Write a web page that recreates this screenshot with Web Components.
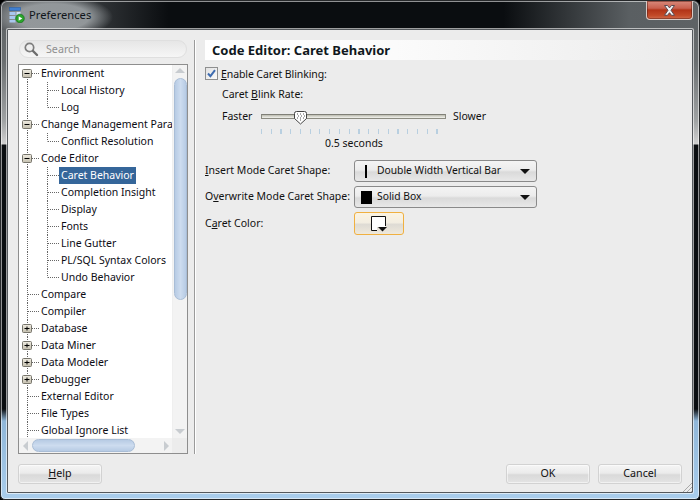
<!DOCTYPE html>
<html><head><meta charset="utf-8"><style>
html,body{margin:0;padding:0;background:#000;width:700px;height:500px;overflow:hidden}
body{font:10.5px "Noto Sans",sans-serif;color:#111}
</style></head><body>
<x-window>
  <x-titlebar slot="title">Preferences</x-titlebar>
  <x-tree-panel slot="left"></x-tree-panel>
  <x-caret-panel slot="right"></x-caret-panel>
  <x-btn slot="help" wide><u>H</u>elp</x-btn>
  <x-btn slot="ok">OK</x-btn>
  <x-btn slot="cancel">Cancel</x-btn>
</x-window>
<script>
const def=(n,html)=>{customElements.define(n,class extends HTMLElement{
  constructor(){super();this.attachShadow({mode:'open'}).innerHTML=typeof html==='function'?html(this):html;}
});};
const FONT='"Noto Sans",sans-serif';
const STRIP='linear-gradient(180deg,#5c6062 0,#6a6e70 60px,#a0a3a4 120px,#d0d0d0 143px,#0a0d10 144px,#0a0d10 408px,#8fb6d8 420px,#a9cdec 100%)';

def('x-window',`<style>
:host{display:flex;flex-direction:column;width:700px;height:500px;box-sizing:border-box;border-radius:7px 7px 5px 5px;overflow:hidden;border:1px solid #26282a;
background:
 linear-gradient(90deg,rgba(90,94,97,1) 0,rgba(90,94,97,1) 3%,rgba(10,13,16,1) 24%,rgba(10,13,16,1) 72%,#5a5f62 90%,#5e6265 100%) 0 0/100% 29px no-repeat,
 ${STRIP} 0 0/8px 100% no-repeat,
 ${STRIP} 100% 0/8px 100% no-repeat,
 #a9cdec;position:relative;box-shadow:inset 0 0 0 1px rgba(255,255,255,.55)}
.top{flex:none;height:28px}
.client{flex:1;margin:0 6px 6px;background:#ececec;border:1px solid #55595d;border-radius:1px;display:flex;flex-direction:column;min-height:0;box-shadow:0 0 0 1px rgba(255,255,255,.6);position:relative}
.main{flex:1;display:flex;min-height:0;padding:10px 10px 0 10px}
.foot{flex:none;display:flex;align-items:center;padding:10px 10px 8px 10px;gap:8px;height:20px}
.sp{flex:1}
.grip{position:absolute;right:0;bottom:0;width:12px;height:12px;background:repeating-linear-gradient(135deg,transparent 0 1px,#a9a9a9 1px 2px,#ececec 2px 3px);clip-path:polygon(100% 0,100% 100%,0 100%)}
</style>
<div class="top"><slot name="title"></slot></div>
<div class="client">
 <div class="main"><slot name="left"></slot><slot name="right"></slot></div>
 <div class="foot"><slot name="help"></slot><div class="sp"></div><slot name="ok"></slot><slot name="cancel"></slot></div>
 <div class="grip"></div>
</div>`);

def('x-titlebar',`<style>
:host{display:flex;align-items:center;height:28px;padding-left:8px;gap:4px;position:relative;font:11.2px ${FONT};color:#10151a}
.glow{position:absolute;left:-8px;top:-6px;width:120px;height:44px;background:radial-gradient(ellipse closest-side,rgba(150,155,158,.95) 60%,rgba(150,155,158,0));}
svg,span{position:relative}
span{margin-top:-2px}
.x{position:absolute;right:6px;top:0;width:47px;height:19px;box-sizing:border-box;border:1px solid #d8cac6;border-top:none;border-radius:0 0 4px 4px;background:linear-gradient(180deg,#d98a7c 0,#c9604e 40%,#b23418 50%,#c24a28 80%,#cf6b4c 100%);display:flex;align-items:center;justify-content:center;box-shadow:inset 0 0 0 1px rgba(90,30,20,.5)}
</style>
<div class="glow"></div>
<svg width="16" height="16" viewBox="0 0 16 16"><rect x="0.5" y="0.5" width="11" height="3" fill="#3f7fd0" stroke="#2b62aa" stroke-width=".6"/><rect x="0.5" y="5" width="6" height="3" fill="#a9c7ee"/><rect x="7.500" y="5" width="4" height="3" fill="#cfe0f6"/><rect x="0.5" y="9" width="6" height="3" fill="#a9c7ee"/><rect x="0.5" y="13" width="6" height="2.5" fill="#a9c7ee"/><circle cx="11" cy="11.5" r="4.3" fill="#2aa52a" stroke="#12701a" stroke-width=".7"/><path d="M9.7 9.2v4.6l3.6-2.3z" fill="#fff"/></svg>
<span><slot></slot></span>
<div class="x"><svg width="15" height="13" viewBox="0 0 15 13"><path d="M2.500 1.500h3l2 2.400 2-2.400h3l-3.500 4.800 3.500 5h-3l-2-2.600-2 2.600h-3l3.500-5z" fill="#f3f5f8" stroke="#5b4a50" stroke-width="1"/></svg></div>`);

def('x-btn',`<style>
:host{display:flex;align-items:center;justify-content:center;width:84px;height:20px;box-sizing:border-box;padding-bottom:2px;border:1px solid #d2d2d2;border-radius:3px;background:linear-gradient(180deg,#f5f5f5 0,#ebebeb 45%,#d9d9d9 55%,#e4e4e4 100%);font:10.7px ${FONT};color:#111;box-shadow:inset 0 0 0 1px rgba(255,255,255,.5)}
</style><span><slot></slot></span>`);

/* ---------- tree ---------- */
def('x-tree-row',(h)=>{
 const l=+h.getAttribute('level')||0,k=h.getAttribute('kind')||'leaf',pos=h.getAttribute('pos')||'mid';
 const sel=h.hasAttribute('selected');
 const w=l?40:20;
 let g='<path d="M8.5 ROOTY1V17" stroke="#666" stroke-dasharray="1 1" fill="none"/>'.replace('ROOTY1',h.hasAttribute('first')?'8':'0');
 if(l){g+=`<path d="M28.5 0V${pos==='last'?8.5:17}M29 8.5H40" stroke="#666" stroke-dasharray="1 1" fill="none"/>`;}
 else{g+=`<path d="M${k==='leaf'?9:13} 8.5H20" stroke="#666" stroke-dasharray="1 1" fill="none"/>`;
  if(k!=='leaf'){g+=`<rect x="3.5" y="4.5" width="9" height="8" rx="1" fill="url(#b)" stroke="#77756c"/><path d="M5.500 8.500h5" stroke="#000"/>`+(k==='closed'?'<path d="M8 6.500v4" stroke="#000"/>':'');}
 }
 return `<style>
 :host{display:flex;height:17px;align-items:center;font:10.5px ${FONT};color:#0c0c14;white-space:nowrap;min-width:0}
 svg{flex:none}
 span{padding:0 2px;line-height:16px;height:17px;${sel?'background:#35669a;color:#fff;':''}}
 </style><svg width="${w}" height="17" viewBox="0 0 ${w} 17"><defs><linearGradient id="b" x1="0" y1="0" x2="0" y2="1"><stop offset="0" stop-color="#efece2"/><stop offset="1" stop-color="#c4bfae"/></linearGradient></defs>${g}</svg><span><slot></slot></span>`;
});

def('x-vscroll',`<style>
:host{display:flex;flex-direction:column;align-items:center;width:14px;flex:none;background:#f3f3f3;border-left:1px solid #efefef;padding:0}
.a{width:0;height:0;border:5px solid transparent;border-top:none;border-bottom:5px solid #c8ccd0;margin-top:3px}
.t{width:13px;height:222px;margin-top:5px;box-sizing:border-box;border:1px solid #a9bdd6;border-radius:7px;background:linear-gradient(90deg,#b7cbe4,#cddcef 50%,#b7cbe4)}
.s{flex:1}
.d{width:0;height:0;border:5px solid transparent;border-bottom:none;border-top:5px solid #c8ccd0;margin-bottom:4px}
</style><div class="a"></div><div class="t"></div><div class="s"></div><div class="d"></div>`);

def('x-hscroll',`<style>
:host{display:flex;align-items:center;height:15px;flex:none;background:#f3f3f3}
.a{width:0;height:0;border:5px solid transparent;border-left:none;border-right:5px solid #c8ccd0;margin-left:4px}
.t{width:103px;height:13px;margin-left:4px;box-sizing:border-box;border:1px solid #a9bdd6;border-radius:7px;background:linear-gradient(180deg,#b7cbe4,#cddcef 50%,#b7cbe4)}
.s{flex:1}
.d{width:0;height:0;border:5px solid transparent;border-right:none;border-left:5px solid #c8ccd0;margin-right:3px}
.c{width:15px;height:15px;background:#ececec}
</style><div class="a"></div><div class="t"></div><div class="s"></div><div class="d"></div><div class="c"></div>`);

const rows=[
 ['Environment',0,'open',{first:1}],['Local History',1],['Log',1,'leaf',{last:1}],
 ['Change Management Param',0,'open'],['Conflict Resolution',1,'leaf',{last:1}],
 ['Code Editor',0,'open'],['Caret Behavior',1,'leaf',{sel:1}],['Completion Insight',1],['Display',1],['Fonts',1],['Line Gutter',1],['PL/SQL Syntax Colors',1],['Undo Behavior',1,'leaf',{last:1}],
 ['Compare',0],['Compiler',0],['Database',0,'closed'],['Data Miner',0,'closed'],['Data Modeler',0,'closed'],['Debugger',0,'closed'],['External Editor',0],['File Types',0],['Global Ignore List',0]];
const rowHtml=rows.map(([t,l,k,o])=>{o=o||{};return `<x-tree-row level="${l}" kind="${k||'leaf'}" pos="${o.last?'last':'mid'}"${o.first?' first':''}${o.sel?' selected':''}>${t}</x-tree-row>`}).join('');

def('x-tree-panel',`<style>
:host{display:flex;flex-direction:column;width:170px;flex:none;gap:6px}
.search{height:18px;box-sizing:border-box;margin:0 1px;border:1px solid #dfdfdf;border-radius:9px;background:linear-gradient(180deg,#e6e6e6,#f6f6f6);display:flex;align-items:center;gap:7px;padding-left:3px;color:#8f8f8f;font:10.7px ${FONT}}
.search span{margin-top:0}
.tree{flex:1;min-height:0;display:flex;flex-direction:column;border:1px solid #8e8e8e;background:#fff}
.up{flex:1;min-height:0;display:flex}
.rows{flex:1;min-width:0;overflow:hidden;display:flex;flex-direction:column}
</style>
<div class="search"><svg width="16" height="16" viewBox="0 0 16 16"><circle cx="6.500" cy="6.500" r="4.200" fill="#eee" stroke="#7d7d7d" stroke-width="1.700"/><path d="M10 10l4 4" stroke="#6d6d6d" stroke-width="2.400" stroke-linecap="round"/></svg><span>Search</span></div>
<div class="tree"><div class="up"><div class="rows">${rowHtml}</div><x-vscroll></x-vscroll></div><x-hscroll></x-hscroll></div>`);

/* ---------- right ---------- */
def('x-check',`<style>
:host{display:flex;align-items:center;gap:3px;font:10.5px ${FONT};color:#111;height:13px;letter-spacing:-.1px}
.b{width:13px;height:13px;box-sizing:border-box;border:1px solid #8e8f8f;background:linear-gradient(135deg,#e2e2e2,#fafafa);display:block}
svg{display:block}
</style><div class="b"><svg width="11" height="11" viewBox="0 0 11 11"><path d="M2 5.500l2.400 2.600L9 2.200" fill="none" stroke="#3e6cb0" stroke-width="2"/></svg></div><slot></slot>`);

def('x-slider',`<style>
:host{display:flex;flex-direction:column;width:185px;position:relative;height:25px}
.track{height:5px;margin-top:4px;box-sizing:border-box;border:1px solid #8c8c82;border-top-color:#808078;background:linear-gradient(180deg,#bcbcb0,#f3f3ee);}
.ticks{margin-top:10px;height:5px;background:repeating-linear-gradient(90deg,#b8cfe0 0 1px,transparent 1px 9.75px)}
.th{position:absolute;left:32px;top:0}
</style><div class="track"></div><div class="ticks"></div>
<svg class="th" width="15" height="15" viewBox="0 0 15 15"><path d="M1.500 3.500a2 2 0 0 1 2-2h8a2 2 0 0 1 2 2v5l-6 5.500-6-5.500z" fill="#fff" stroke="#444"/><path d="M4 4h1M7 4h1M10 4h1M5 6h1M8 6h1M11 6h1M4 8h1M7 8h1M10 8h1M7 10h1" stroke="#555"/></svg>`);

def('x-select',`<style>
:host{display:flex;align-items:center;width:183px;height:22px;box-sizing:border-box;border:1px solid #8a8a8a;border-radius:3px;background:linear-gradient(180deg,#f4f4f4 0,#ececec 45%,#dadada 55%,#e8e8e8 100%);font:10.3px ${FONT};color:#111;padding-left:4px;white-space:nowrap}
.i{flex:none;width:14px;display:flex;justify-content:center;margin-right:4px}
.t{flex:1;margin-top:-2px}
.a{width:0;height:0;border:5px solid transparent;border-bottom:none;border-top:5px solid #111;margin-right:6px}
</style><div class="i"><slot name="icon"></slot></div><div class="t"><slot></slot></div><div class="a"></div>`);

def('x-color-btn',`<style>
:host{display:flex;align-items:center;justify-content:center;width:50px;height:23px;box-sizing:border-box;border:1px solid #f0b040;border-radius:3px;background:linear-gradient(180deg,#fbf3e2 0,#f3eee2 45%,#dedbd4 55%,#efe9dc 100%)}
</style><svg width="18" height="21" viewBox="0 0 18 21"><path d="M1.500 3.500H15.500V14H7V17.500H1.500z" fill="#fff"/><path d="M7 17.500H1.500V3.500H15.500V13" fill="none" stroke="#111"/><path d="M8 14h9l-4.500 4.500z" fill="#111"/></svg>`);

def('x-caret-panel',`<style>
:host{display:flex;flex:1;min-width:0;margin-left:6px;border-left:1px solid #9a9a9a;padding-left:10px;box-shadow:inset 1px 0 0 #fff;flex-direction:column;font:10.5px ${FONT};color:#111}
h1{margin:0;height:20px;font:bold 13px/20px ${FONT};padding-left:7px;color:#101820;background:linear-gradient(90deg,#fff 0,#fbfbfb 40%,#ececec 100%)}
.c{display:flex;flex-direction:column;padding-top:7px}
.lbl{margin:6px 0 0 17px;height:17px;line-height:17px}
.sl{display:flex;margin:7px 0 0 17px}
.sl span{line-height:12px;height:13px}
.sl span:first-child{width:39px}
.sl x-slider{flex:none;margin-right:7px}
.val{margin:0 0 0 120px;height:16px;line-height:16px}
.form{display:grid;grid-template-columns:149px auto;justify-content:start;align-items:center;row-gap:4px;margin-top:9px;white-space:nowrap}
.form>div{padding-bottom:2px}
u{text-underline-offset:1px}
</style>
<h1>Code Editor: Caret Behavior</h1>
<div class="c">
 <x-check><span><u>E</u>nable Caret Blinking:</span></x-check>
 <div class="lbl">Caret <u>B</u>link Rate:</div>
 <div class="sl"><span>Faster</span><x-slider></x-slider><span>Slower</span></div>
 <div class="val">0.5 seconds</div>
 <div class="form">
  <div><u>I</u>nsert Mode Caret Shape:</div>
  <x-select><svg slot="icon" width="2" height="13"><rect width="2" height="13" fill="#000"/></svg>Double Width Vertical Bar</x-select>
  <div>O<u>v</u>erwrite Mode Caret Shape:</div>
  <x-select><svg slot="icon" width="11" height="13"><rect width="11" height="13" fill="#000"/></svg>Solid Box</x-select>
  <div>C<u>a</u>ret Color:</div>
  <x-color-btn></x-color-btn>
 </div>
</div>`);
</script>
</body></html>
